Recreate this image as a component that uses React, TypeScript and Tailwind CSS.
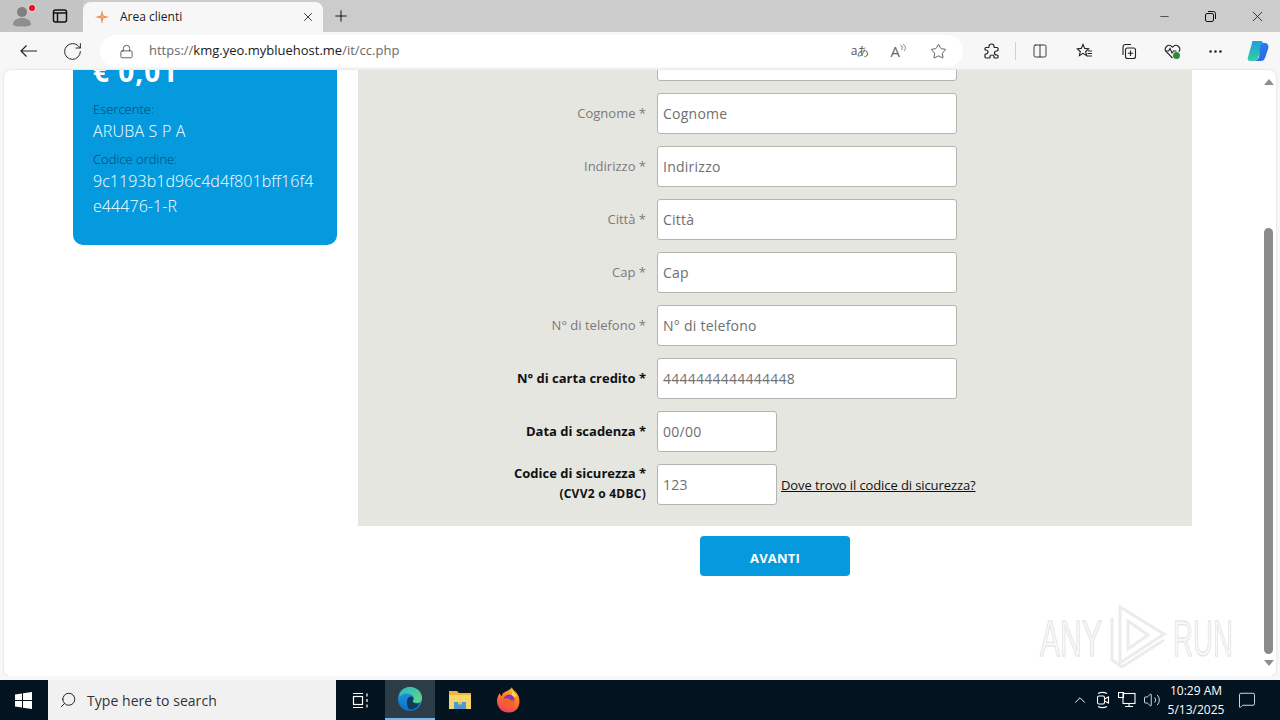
import React from 'react';
import {
  RotateCw,
  Lock,
  X,
  Plus,
  Minus,
  Star,
  Columns2,
  MoreHorizontal,
  Search,
  ChevronUp,
  Volume2,
  MessageSquare,
} from 'lucide-react';

const SANS = "font-['Open_Sans','Noto_Sans',sans-serif]";

const fields = [
  { label: 'Cognome *', value: 'Cognome' },
  { label: 'Indirizzo *', value: 'Indirizzo' },
  { label: 'Città *', value: 'Città' },
  { label: 'Cap *', value: 'Cap' },
  { label: 'N° di telefono *', value: 'N° di telefono' },
];

const Input = ({ value, short }: { value: string; short?: boolean }) => (
  <div
    className={`h-[41px] ${short ? 'w-[120px]' : 'w-[300px]'} shrink-0 rounded-[3px] border border-[#b5b5b0] bg-white px-[5px] text-[14px] leading-[39px] tracking-[0.25px] text-[#6f6f6f]`}
  >
    {value}
  </div>
);

const Row = ({ children, value, short, after }: { children: React.ReactNode; value: string; short?: boolean; after?: React.ReactNode }) => (
  <div className="flex h-[41px] items-center">
    <div className="mb-[2px] w-[288px] text-right text-[13px] leading-[20px]">{children}</div>
    <div className="ml-[11px]">
      <Input value={value} short={short} />
    </div>
    {after}
  </div>
);

const EdgeLogo = () => (
  <svg width="26" height="26" viewBox="0 0 26 26">
    <defs>
      <linearGradient id="edgeA" x1="0" y1="0" x2="1" y2="1">
        <stop offset="0" stopColor="#2fb6c8" />
        <stop offset="1" stopColor="#63d97c" />
      </linearGradient>
      <linearGradient id="edgeB" x1="0" y1="0" x2="0" y2="1">
        <stop offset="0" stopColor="#1fa0e6" />
        <stop offset="1" stopColor="#0f6cc4" />
      </linearGradient>
    </defs>
    <circle cx="13" cy="13" r="12" fill="url(#edgeB)" />
    <path d="M2.500 8C4.500 3.500 8.500 1 13 1c7 0 12 5 12 11 0 3-2 5-5 5-2.500 0-4-1-4.500-2 1-1 1.500-2 1-3.500C15.500 8.500 12 7 8.500 7.500 6 8 4 9 2.500 11z" fill="url(#edgeA)" />
    <path d="M10 15c0-3 2-4.500 4-4.500 2.500 0 3 2 2 4-1 1.500 1 3 4 3 1 0 2-.5 2.500-1-1 4-5 7-9 7-2 0-3.500-3.500-3.500-8.500z" fill="#123a5c" />
  </svg>
);

const FolderLogo = () => (
  <svg width="24" height="20" viewBox="0 0 24 20">
    <path d="M1 1h8l2 2h12v16H1z" fill="#e8b83d" />
    <path d="M1 5h22v14H1z" fill="#f8d568" />
    <path d="M6 12h12v7H6z" fill="#4a9bd4" />
    <path d="M10 12h4v2.500h-4z" fill="#e6c25a" />
  </svg>
);

const FirefoxLogo = () => (
  <svg width="24" height="26" viewBox="0 0 24 26">
    <defs>
      <linearGradient id="ffA" x1="0.7" y1="0" x2="0.3" y2="1">
        <stop offset="0" stopColor="#ffc52e" />
        <stop offset="0.45" stopColor="#ff7a1f" />
        <stop offset="1" stopColor="#ee3a60" />
      </linearGradient>
    </defs>
    <path d="M15 0c0 3 4 4 6 8 3 6 2 17-9 17.500C5 26 0 20 0 14c0-3 1-6 3-8 0 2 1 3 2 3 0-3 3-4 5-5 2-1 4-2 5-4z" fill="url(#ffA)" />
    <path d="M15 2c0 3 3 4 4 6 1 3-2 2-4 1z" fill="#ffd84a" />
    <circle cx="12" cy="13" r="5.500" fill="#7d3cc0" />
    <path d="M6 12c2-1 5-1 7 .5 2 1.500 4 1 5 .5 0 5-3 7-6 7-3 0-6-3-6-8z" fill="#f4602e" />
  </svg>
);

const CopilotLogo = () => (
  <svg width="24" height="24" viewBox="0 0 24 24">
    <defs>
      <linearGradient id="coA" x1="0.5" y1="0" x2="0.5" y2="1">
        <stop offset="0" stopColor="#1f9fe0" />
        <stop offset="1" stopColor="#33cfa0" />
      </linearGradient>
      <linearGradient id="coB" x1="0" y1="0" x2="1" y2="1">
        <stop offset="0" stopColor="#2a8cf0" />
        <stop offset="1" stopColor="#2a5fe0" />
      </linearGradient>
    </defs>
    <path d="M7 2h8c1 0 2 1 2 2l-5 15c-1 2-2 3-4 3H4c-2 0-3-2-2-4L6 4c0-1 0-2 1-2z" fill="url(#coA)" />
    <path d="M14 7l3-3h3c2 1 3 3 2 6l-3 9c-1 2-2 3-4 3h-6c2-1 3-2 4-4z" fill="url(#coB)" />
  </svg>
);

const Watermark = () => (
  <svg width="200" height="70" viewBox="0 0 200 70" fill="#f8f8f8" stroke="#e6e6e6" strokeWidth="1.400">
    <text x="2" y="52" fontFamily="Liberation Sans" fontSize="50" textLength="62" lengthAdjust="spacingAndGlyphs">
      ANY
    </text>
    <g fill="none" stroke="#ececec" strokeWidth="3">
      <path d="M74 14v42l10 7" />
      <path d="M82 3v56l44-29z" />
      <path d="M90 17v28l20-14z" />
      <path d="M84 63l42-27" />
    </g>
    <text x="135" y="52" fontFamily="Liberation Sans" fontSize="50" textLength="60" lengthAdjust="spacingAndGlyphs">
      RUN
    </text>
  </svg>
);

const App: React.FC = () => {
  return (
    <div className={`flex h-screen w-[1280px] flex-col overflow-hidden bg-[#f7f7f7] ${SANS}`}>
      {/* tab strip */}
      <div className="flex h-[32px] shrink-0 items-end bg-[#cccccc]">
        <div className="flex h-[32px] w-[83px] shrink-0 items-center bg-[#c4c4c4]">
          <div className="relative ml-[10px] flex h-[24px] w-[24px] items-center justify-center">
            <svg width="22" height="22" viewBox="0 0 22 22">
              <circle cx="11" cy="7" r="5" fill="#7f7f7f" />
              <path d="M2 20c0-5 4-7 9-7s9 2 9 7c-3 2-15 2-18 0z" fill="#8f8f8f" />
            </svg>
            <span className="absolute right-[-1px] top-[1px] h-[6px] w-[6px] rounded-full bg-[#e81123] shadow-[0_0_0_1px_#e8d0d0]" />
          </div>
          <svg className="ml-[18px]" width="16" height="16" viewBox="0 0 16 16" fill="none" stroke="#111" strokeWidth="1.500">
            <rect x="1.500" y="2" width="13" height="12" rx="2" />
            <path d="M1.500 5h13M5.500 5v9" />
          </svg>
        </div>
        <div className="flex h-[30px] w-[240px] shrink-0 items-center rounded-t-[8px] bg-[#f7f7f7] pl-[12px] pr-[8px]">
          <svg width="14" height="14" viewBox="0 0 14 14">
            <path d="M7 0l1.300 5.700L14 7l-5.700 1.300L7 14 5.700 8.300 0 7l5.700-1.300z" fill="#ef7f45" />
            <circle cx="7" cy="7" r="2.400" fill="#f4a37a" />
          </svg>
          <span className="ml-[11px] flex-1 text-[12px] text-[#1a1a1a]">Area clienti</span>
          <X size={14} strokeWidth={1.5} color="#222" />
        </div>
        <div className="flex h-[32px] w-[36px] items-center justify-center">
          <Plus size={18} strokeWidth={1.3} color="#111" />
        </div>
        <div className="flex-1" />
        <div className="flex h-[32px] items-center">
          <div className="flex w-[46px] justify-center">
            <Minus size={13} strokeWidth={1.2} color="#111" />
          </div>
          <div className="flex w-[47px] justify-center">
            <svg width="11" height="11" viewBox="0 0 11 11" fill="none" stroke="#111" strokeWidth="1">
              <rect x="0.500" y="2.500" width="8" height="8" rx="1.500" />
              <path d="M3 0.500h5.500a2 2 0 0 1 2 2V8" />
            </svg>
          </div>
          <div className="flex w-[46px] justify-center">
            <X size={17} strokeWidth={1.1} color="#111" />
          </div>
        </div>
      </div>

      {/* toolbar */}
      <div className="flex h-[38px] shrink-0 items-center bg-[#f7f7f7]">
        <div className="ml-[20px] w-[17px]">
          <svg width="17" height="12" viewBox="0 0 17 12" fill="none" stroke="#222" strokeWidth="1.200">
            <path d="M17 6H1M6.500 .5L1 6l5.500 5.500" />
          </svg>
        </div>
        <div className="ml-[25px] w-[21px]">
          <RotateCw size={21} strokeWidth={1.1} color="#222" />
        </div>
        <div className="ml-[17px] flex h-[32px] w-[863px] items-center rounded-full bg-white pl-[19px]">
          <Lock size={15} strokeWidth={1.3} color="#444" />
          <div className="ml-[15px] flex-1 text-[13px] text-[#6a6a6a]">
            https://<span className="text-[#1a1a1a]">kmg.yeo.mybluehost.me</span>/it/cc.php
          </div>
          <span className="mr-[1px] text-[12px] text-[#555]">aあ</span>
          <span className="ml-[20px] text-[15px] text-[#666]">A</span>
          <svg className="mb-[6px]" width="6" height="8" viewBox="0 0 6 8" fill="none" stroke="#666" strokeWidth="0.8">
            <path d="M0.500 1c2 1 2 3 1 5M3 0c3 2 3 5 1 7" />
          </svg>
          <Star className="ml-[24px] mr-[16px]" size={17} strokeWidth={1.2} color="#444" />
        </div>
        <div className="ml-[20px] w-[16px]">
          <svg width="17" height="17" viewBox="0 0 17 17" fill="none" stroke="#222" strokeWidth="1.200">
            <path d="M6 3.500C6 2 7 1 8.500 1S11 2 11 3.500c0 .5 0 1 .5 1H14c.5 0 1 .5 1 1v2c0 .5-1 .5-1.500.5-1.200 0-2 1-2 2s.8 2 2 2c.5 0 1.500 0 1.500.5V14c0 .5-.5 1-1 1h-2.500c-.5 0-.5-.5-.5-1 0-1.200-1-2-2-2s-2 .8-2 2c0 .5 0 1-.5 1H3c-.5 0-1-.5-1-1v-2.500c0-.5.5-.5 1-.5 1.200 0 2-1 2-2s-.8-2-2-2c-.5 0-1 0-1-.5V5.500c0-.5.500-1 1-1h2.500c.5 0 .5-.5.5-1z" />
          </svg>
        </div>
        <div className="ml-[16px] h-[18px] w-px bg-[#d0d0d0]" />
        <div className="ml-[16px] w-[16px]">
          <Columns2 size={16} strokeWidth={1.3} color="#222" />
        </div>
        <div className="ml-[28px] w-[16px]">
          <svg width="17" height="17" viewBox="0 0 17 17" fill="none" stroke="#222" strokeWidth="1.100">
            <path d="M7 1.500l1.700 3.900 4 .4-3 2.700.9 4.100L7 10.400l-3.600 2.200.9-4.100-3-2.700 4-.4z" />
            <path d="M12 8h4M11.500 10.500h4.500M11 13h5" />
          </svg>
        </div>
        <div className="ml-[28px] w-[16px]">
          <svg width="17" height="17" viewBox="0 0 17 17" fill="none" stroke="#222" strokeWidth="1.100">
            <path d="M3 12V4a2.500 2.500 0 0 1 2.500-2.500H11" />
            <rect x="5.500" y="5" width="10" height="10.500" rx="2" />
            <path d="M10.500 7.500v5.500M7.800 10.200h5.400" />
          </svg>
        </div>
        <div className="relative ml-[28px] w-[16px]">
          <svg width="17" height="17" viewBox="0 0 17 17" fill="none" stroke="#222" strokeWidth="1.100">
            <path d="M8.500 15L2.200 8.600a3.800 3.800 0 0 1 5.400-5.300l.9.900.9-.9a3.800 3.800 0 0 1 5.400 5.300" />
            <path d="M1.500 8h3l1.500-2.500L8 10l1.500-2h3" />
          </svg>
          <span className="absolute left-[9px] top-[9px] h-[7px] w-[7px] rounded-full bg-[#2e8b3d]" />
        </div>
        <div className="ml-[27px] w-[16px]">
          <MoreHorizontal size={17} strokeWidth={1.7} color="#222" />
        </div>
        <div className="ml-[23px]">
          <CopilotLogo />
        </div>
      </div>

      {/* page */}
      <div className="ml-[4px] flex h-[606px] w-[1272px] shrink-0 overflow-hidden rounded-[7px] shadow-[0_0_2px_#c8c8c8]">
        <div className="relative w-[1260px] overflow-hidden bg-white">
          <div className="mt-[-47px] flex items-start pl-[69px]">
            {/* order summary */}
            <div className="w-[264px] shrink-0 rounded-[10px] bg-[#059ade] px-[20px] pb-[26px] pt-[13px] text-white">
              <div className="text-[28px] font-bold leading-[70px] tracking-[1px]">€ 0,01</div>
              <div className="mt-[-7px] text-[13px] font-light leading-[20px] text-[#063f6b]">Esercente:</div>
              <div className="text-[16px] font-light leading-[24px] tracking-[0.2px]">ARUBA S P A</div>
              <div className="mt-[6px] text-[13px] font-light leading-[20px] text-[#063f6b]">Codice ordine:</div>
              <div className="break-all text-[16px] font-light leading-[25px] tracking-[0.07px]">9c1193b1d96c4d4f801bff16f4e44476-1-R</div>
            </div>

            {/* form */}
            <div className="ml-[21px] w-[834px] shrink-0">
              <div className="flex flex-col gap-[12px] bg-[#e6e6e1] pb-[21px] pt-[17px]">
                <Row value="">
                  <span className="text-[#7a7a7a]">Nome *</span>
                </Row>
                {fields.map((f) => (
                  <Row key={f.label} value={f.value}>
                    <span className="text-[#7a7a7a]">{f.label}</span>
                  </Row>
                ))}
                <Row value="4444444444444448">
                  <span className="font-bold text-[#111]">N° di carta credito *</span>
                </Row>
                <Row value="00/00" short>
                  <span className="font-bold text-[#111]">Data di scadenza *</span>
                </Row>
                <Row
                  value="123"
                  short
                  after={<span className="ml-[4px] mt-[2px] text-[13px] tracking-[-0.1px] text-[#111] underline">Dove trovo il codice di sicurezza?</span>}
                >
                  <div className="mt-[-1px] font-bold text-[#111]">Codice di sicurezza *</div>
                  <div className="mt-[1px] text-[12px] font-bold tracking-[0.25px] text-[#111]">(CVV2 o 4DBC)</div>
                </Row>
              </div>
              <div className="mt-[10px] flex justify-center">
                <div className="flex h-[40px] w-[150px] items-center justify-center rounded-[4px] bg-[#059ade] pt-[5px] text-[13px] font-bold tracking-[0.2px] text-white">
                  AVANTI
                </div>
              </div>
            </div>
          </div>

          {/* watermark */}
          <div className="absolute left-[1034px] top-[534px] blur-[0.4px]">
            <Watermark />
          </div>
        </div>

        {/* scrollbar */}
        <div className="flex w-[12px] flex-col items-center bg-white pr-[3px]">
          <div className="mt-[9px] h-0 w-0 border-x-[5px] border-b-[6px] border-x-transparent border-b-[#8f8f8f]" />
          <div className="mt-[143px] h-[426px] w-[9px] rounded-full bg-[#8a8a8a]" />
          <div className="mt-[6px] h-0 w-0 border-x-[5px] border-t-[6px] border-x-transparent border-t-[#8f8f8f]" />
        </div>
      </div>

      <div className="h-[4px] shrink-0 bg-[#f7f7f7]" />

      {/* taskbar */}
      <div className="flex h-[40px] shrink-0 items-center bg-[#03131f] text-white">
        <div className="flex w-[47px] justify-center">
          <svg width="17" height="17" viewBox="0 0 17 17" fill="#fff">
            <path d="M0 2.500l7-1v6.500H0zM8 1.300L17 0v8H8zM0 9h7v6.500l-7-1zM8 9h9v8l-9-1.300z" />
          </svg>
        </div>
        <div className="ml-[1px] flex h-[40px] w-[288px] items-center bg-[#f1f1f1] pl-[11px]">
          <Search className="-scale-x-100" size={18} strokeWidth={1.3} color="#222" />
          <span className="ml-[10px] text-[14px] tracking-[0.05px] text-[#333]">Type here to search</span>
        </div>
        <div className="flex w-[49px] justify-center">
          <svg width="17" height="17" viewBox="0 0 17 17" fill="none" stroke="#fff" strokeWidth="1.200">
            <path d="M1 1.500h10M1 15.500h10" />
            <rect x="1.500" y="4.500" width="9" height="8" />
            <path d="M15 1.500v3M15 7v3M15 12.500v3" />
          </svg>
        </div>
        <div className="flex h-[40px] w-[50px] items-center justify-center border-b-2 border-[#76b9ed] bg-[#2c3d48]">
          <EdgeLogo />
        </div>
        <div className="flex w-[49px] justify-center">
          <FolderLogo />
        </div>
        <div className="flex w-[49px] justify-center">
          <FirefoxLogo />
        </div>
        <div className="flex-1" />
        <ChevronUp size={18} strokeWidth={1.3} />
        <svg className="ml-[6px]" width="16" height="18" viewBox="0 0 16 18" fill="none" stroke="#fff" strokeWidth="1.100">
          <rect x="2.500" y="5" width="7" height="8" rx="1.500" />
          <path d="M9.500 8l4-2v6l-4-2M3 2.500c3-1.500 6-1.500 9 0M3 15.500c3 1.500 6 1.500 9 0" />
        </svg>
        <svg className="ml-[7px]" width="18" height="16" viewBox="0 0 18 16" fill="none" stroke="#fff" strokeWidth="1.100">
          <rect x="5" y="1.500" width="12" height="10" />
          <rect x="0.500" y="0.500" width="5" height="5" />
          <path d="M11 11.500v3M7 14.500h8" />
        </svg>
        <Volume2 className="ml-[7px]" size={18} strokeWidth={1.1} />
        <div className="ml-[2px] w-[66px] text-center text-[12px] leading-[19px]">
          <div>10:29 AM</div>
          <div>5/13/2025</div>
        </div>
        <MessageSquare className="ml-[9px] mr-[24px]" size={18} strokeWidth={1.1} />
      </div>
    </div>
  );
};

export default App;
